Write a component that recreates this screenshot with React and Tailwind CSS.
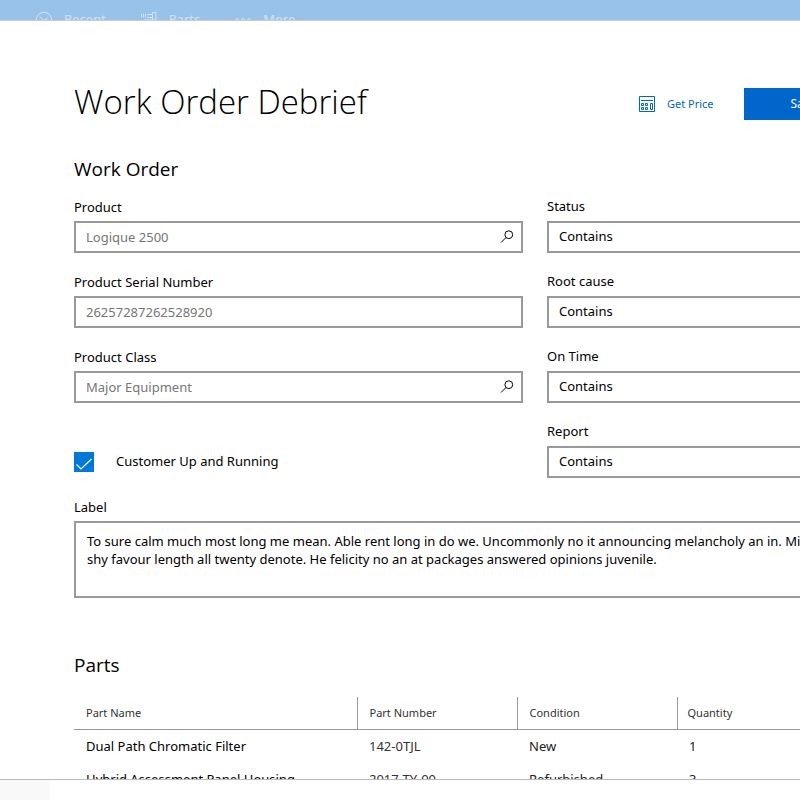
import React, { useState } from 'react';

const parts = [
  { name: 'Dual Path Chromatic Filter', number: '142-0TJL', condition: 'New', quantity: 1 },
  { name: 'Hybrid Assessment Panel Housing', number: '2017-TY-09', condition: 'Refurbished', quantity: 3 },
];

const statusFields = [
  { id: 'status', label: 'Status' },
  { id: 'root-cause', label: 'Root cause' },
  { id: 'on-time', label: 'On Time' },
  { id: 'report', label: 'Report' },
];

const notes =
  'To sure calm much most long me mean. Able rent long in do we. Uncommonly no it announcing melancholy an in. Mirth learn it he given. Secure\nshy favour length all twenty denote. He felicity no an at packages answered opinions juvenile.';

const RecentIcon = () => (
  <svg width="18" height="18" viewBox="0 0 18 18" fill="none" stroke="currentColor">
    <circle cx="9" cy="9" r="7.7" />
    <path d="M4.8 5.8 9 9.5l3.8-2.6" />
  </svg>
);

const PartsIcon = () => (
  <svg width="18" height="18" viewBox="0 0 18 18" fill="none" stroke="currentColor">
    <path d="M1.5 3v3.5M3.5 3v3.5M5.5 3v3.5M7 3.5h5.5M7 6.5h5.5M12.5 1.5H16V9h-3.5zM4 9h8.5v6H4z" />
  </svg>
);

const MoreIcon = () => (
  <svg width="18" height="18" viewBox="0 0 18 18" fill="none" stroke="currentColor">
    <circle cx="3" cy="9" r="1.5" />
    <circle cx="9" cy="9" r="1.5" />
    <circle cx="15" cy="9" r="1.5" />
  </svg>
);

const CalculatorIcon = () => (
  <svg width="16" height="16" viewBox="0 0 16 16" fill="none" stroke="currentColor">
    <path d="M.5.5h15v15H.5zM2 4.5h12" />
    <path d="M2.5 7.5h2v2h-2zM6.500 7.5h2v2h-2zM2.500 11.500h2v2h-2zM6.500 11.500h2v2h-2zM11.500 7.500h2v6h-2z" />
  </svg>
);

const SearchIcon = () => (
  <svg width="14" height="14" viewBox="0 0 14 14" fill="none" stroke="currentColor">
    <circle cx="8.8" cy="4.7" r="3.9" />
    <path d="M6 7.5 1 12.5" />
  </svg>
);

const TextField = ({ id, label, value, searchable }) => (
  <div className="h-[75px]">
    <label htmlFor={id} className="block h-6 leading-5">{label}</label>
    <div className="flex h-8 items-center border-2 border-[#999] pr-[7px]">
      <input
        id={id}
        type="text"
        defaultValue={value}
        className="h-full min-w-0 flex-1 bg-transparent px-2.5 text-[#767676] outline-none"
      />
      {searchable && (
        <button type="button" aria-label={`Search ${label}`}>
          <SearchIcon />
        </button>
      )}
    </div>
  </div>
);

const SelectField = ({ id, label }) => (
  <div className="h-[75px]">
    <label htmlFor={id} className="block h-6 leading-[18px]">{label}</label>
    <select id={id} className="h-8 w-full appearance-none border-2 border-[#999] bg-white px-2.5 outline-none">
      <option>Contains</option>
      <option>Equals</option>
    </select>
  </div>
);

const App = () => {
  const [running, setRunning] = useState(true);

  return (
    <div className="flex h-screen flex-col overflow-hidden bg-white font-['Noto_Sans','Open_Sans',sans-serif] text-[13px] text-black">
      <nav className="h-5 shrink-0 overflow-hidden bg-[#99c2eb] text-[#cfe4f8]">
        <div className="flex h-10 items-center gap-[34px] pl-[35px]">
          <a href="#recent" className="flex items-center gap-[11px]"><RecentIcon />Recent</a>
          <a href="#parts" className="flex items-center gap-[11px]"><PartsIcon />Parts</a>
          <a href="#more" className="flex items-center gap-[11px]"><MoreIcon />More</a>
        </div>
      </nav>

      <main className="min-h-0 flex-1 overflow-hidden border-t border-[#ccc] pl-[74px]">
        <div className="min-w-[922px]">
          <header className="flex items-center pt-[59px]">
            <h1 className="w-[565px] pb-1 font-['Open_Sans',sans-serif] text-[33px] leading-11 font-light">
              Work Order Debrief
            </h1>
            <button type="button" className="flex items-center gap-3 text-[11px] text-[#0067b8]">
              <CalculatorIcon />
              Get Price
            </button>
            <button type="button" className="ml-[30px] h-8 w-[120px] bg-[#0066cc] text-xs text-white">Save</button>
          </header>

          <form>
            <h2 className="mt-[27px] font-['Open_Sans',sans-serif] text-[19px] leading-7">Work Order</h2>
            <div className="mt-3.5 grid grid-cols-2 gap-x-6">
              <div>
                <TextField id="product" label="Product" value="Logique 2500" searchable />
                <TextField id="serial" label="Product Serial Number" value="26257287262528920" />
                <TextField id="class" label="Product Class" value="Major Equipment" searchable />
                <label className="flex h-[75px] items-center gap-[22px] pt-1">
                  <span className="relative h-5 w-5">
                    <input
                      type="checkbox"
                      checked={running}
                      onChange={(e) => setRunning(e.target.checked)}
                      className="block h-5 w-5 appearance-none border-2 border-[#999] checked:border-[#0078d7] checked:bg-[#0078d7]"
                    />
                    {running && (
                      <svg width="20" height="20" viewBox="0 0 20 20" fill="none" stroke="white" strokeWidth="1.2" className="pointer-events-none absolute inset-0">
                        <path d="M2.5 12.5 7 17 17.5 7" />
                      </svg>
                    )}
                  </span>
                  Customer Up and Running
                </label>
              </div>
              <div>
                {statusFields.map((field) => (
                  <SelectField key={field.id} id={field.id} label={field.label} />
                ))}
              </div>
            </div>

            <label htmlFor="notes" className="block h-6 leading-5">Label</label>
            <textarea
              id="notes"
              defaultValue={notes}
              className="block h-[77px] w-full resize-none overflow-hidden border-2 border-[#999] px-[11px] py-[9px] leading-[18px] whitespace-pre outline-none"
            />
          </form>

          <section>
            <h2 className="mt-[53px] font-['Open_Sans',sans-serif] text-[19px] leading-7">Parts</h2>
            <table className="mt-[18px] w-full table-fixed border-collapse text-left">
              <thead>
                <tr className="h-8 border-b border-[#999] text-[11px] text-[#333]">
                  <th className="w-[283px] border-r border-[#999] px-3 font-normal">Part Name</th>
                  <th className="w-40 border-r border-[#999] px-3 font-normal">Part Number</th>
                  <th className="w-40 border-r border-[#999] px-3 font-normal">Condition</th>
                  <th className="px-2.5 font-normal">Quantity</th>
                </tr>
              </thead>
              <tbody>
                {parts.map((part) => (
                  <tr key={part.number} className="h-[33px]">
                    <td className="px-3 pt-0.5">{part.name}</td>
                    <td className="px-3 pt-0.5 text-[#333]">{part.number}</td>
                    <td className="px-3 pt-0.5 text-[#222]">{part.condition}</td>
                    <td className="px-3 pt-0.5 text-[#222]">{part.quantity}</td>
                  </tr>
                ))}
              </tbody>
            </table>
          </section>
        </div>
      </main>

      <footer className="h-[21px] shrink-0 border-t border-[#bbb]">
        <div className="h-full w-[50px] bg-[#f9f9f9]" />
      </footer>
    </div>
  );
};

export default App;
